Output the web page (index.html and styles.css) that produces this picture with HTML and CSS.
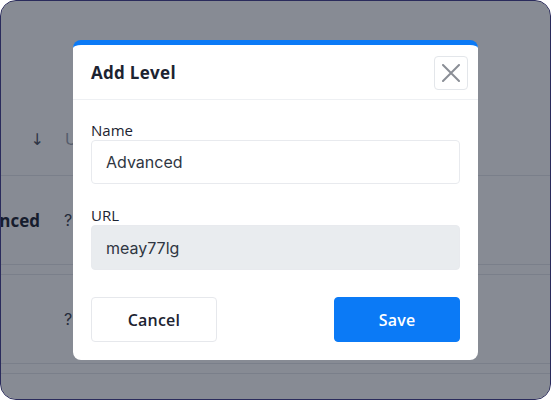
FILE: index.html
```html
<!DOCTYPE html>
<html lang="en">
<head>
<meta charset="utf-8">
<title>Add Level</title>
<link rel="stylesheet" href="styles.css">
</head>
<body>
<div class="frame">
  <div class="table">
    <div class="thead">
      <span class="sort">↓</span>
      <span class="col-head">URL</span>
    </div>
    <div class="trow">
      <div class="cell-name"><span>Advanced</span></div>
      <span class="q">?</span>
    </div>
    <div class="trow">
      <div class="cell-name"><span></span></div>
      <span class="q">?</span>
    </div>
    <div class="trow trow-last"></div>
  </div>

  <div class="overlay">
    <div class="modal">
      <div class="modal-header">
        <h2 class="modal-title">Add Level</h2>
        <button class="close-btn" aria-label="Close">
          <svg width="18" height="18" viewBox="0 0 18 18"><path d="M1 1 L17 17 M17 1 L1 17" stroke="#8a8e96" stroke-width="2" stroke-linecap="round" fill="none"/></svg>
        </button>
      </div>
      <div class="modal-body">
        <label class="field-label">Name</label>
        <div class="input">Advanced</div>
        <label class="field-label second">URL</label>
        <div class="input disabled">meay77lg</div>
        <div class="actions">
          <button class="btn btn-cancel">Cancel</button>
          <button class="btn btn-save">Save</button>
        </div>
      </div>
    </div>
  </div>
</div>
</body>
</html>
```
FILE: styles.css
```css
* { box-sizing: border-box; }
html, body { margin: 0; padding: 0; background: #ffffff; }
body { width: 551px; height: 400px; overflow: hidden; font-family: "Open Sans", "Liberation Sans", sans-serif; }

.frame {
  position: relative;
  width: 551px;
  height: 400px;
  border: 1px solid #2a2b5c;
  border-radius: 16px;
  overflow: hidden;
  background: #ffffff;
}

.table { padding-top: 118px; }
.thead {
  height: 56px;
  display: flex;
  align-items: center;
  padding-bottom: 16px;
}
.sort { width: 43px; text-align: right; color: #4b5260; font-size: 16px; font-family: "DejaVu Sans", sans-serif; }
.col-head { margin-left: 21px; color: #9aa1ad; font-size: 16px; font-family: Inter, sans-serif; }

.trow {
  height: 90px;
  border-top: 1px solid #e4e7eb;
  border-bottom: 1px solid #e4e7eb;
  display: flex;
  align-items: center;
  margin-bottom: 9px;
}
.cell-name { width: 39px; display: flex; justify-content: flex-end; white-space: nowrap; font-weight: 700; font-size: 17px; color: #1c2331; }
.q { margin-left: 24px; font-size: 16px; color: #3c4350; font-family: Inter, sans-serif; }

.overlay {
  position: absolute;
  inset: 0;
  background: rgba(15, 23, 42, 0.5);
  display: flex;
  align-items: center;
  justify-content: center;
}

.modal {
  width: 405px;
  background: #ffffff;
  border-top: 5px solid #0b7af6;
  border-radius: 8px;
}

.modal-header {
  height: 55px;
  border-bottom: 1px solid #eef0f3;
  display: flex;
  align-items: center;
  justify-content: space-between;
  padding: 1px 10px 0 18px;
}
.modal-title { margin: 0; font-size: 17px; font-weight: 700; color: #1c2331; letter-spacing: 0.3px; }
.close-btn {
  width: 34px;
  height: 34px;
  border: 1px solid #e3e6ea;
  border-radius: 4px;
  background: #ffffff;
  display: flex;
  align-items: center;
  justify-content: center;
  padding: 0;
}

.modal-body { padding: 20px 18px 18px; display: flex; flex-direction: column; }
.field-label { font-size: 15px; line-height: 20px; color: #1c2331; font-weight: 500; }
.field-label.second { margin-top: 21px; }
.input {
  height: 44px;
  border: 1px solid #e8eaee;
  border-radius: 4px;
  padding: 0 14px;
  display: flex;
  align-items: center;
  font-family: Inter, sans-serif;
  font-size: 16px;
  color: #2f3642;
  background: #ffffff;
}
.input.disabled { background: #e9ecef; height: 45px; }

.actions { margin-top: 27px; display: flex; justify-content: space-between; }
.btn {
  width: 126px;
  height: 45px;
  border-radius: 4px;
  font-family: "Open Sans", sans-serif;
  font-weight: 600;
  font-size: 16px;
  letter-spacing: 0.2px;
}
.btn-cancel { background: #ffffff; border: 1px solid #e6e8ec; color: #1c2331; }
.btn-save { background: #0b7af6; border: 1px solid #0b7af6; color: #ffffff; }
```
